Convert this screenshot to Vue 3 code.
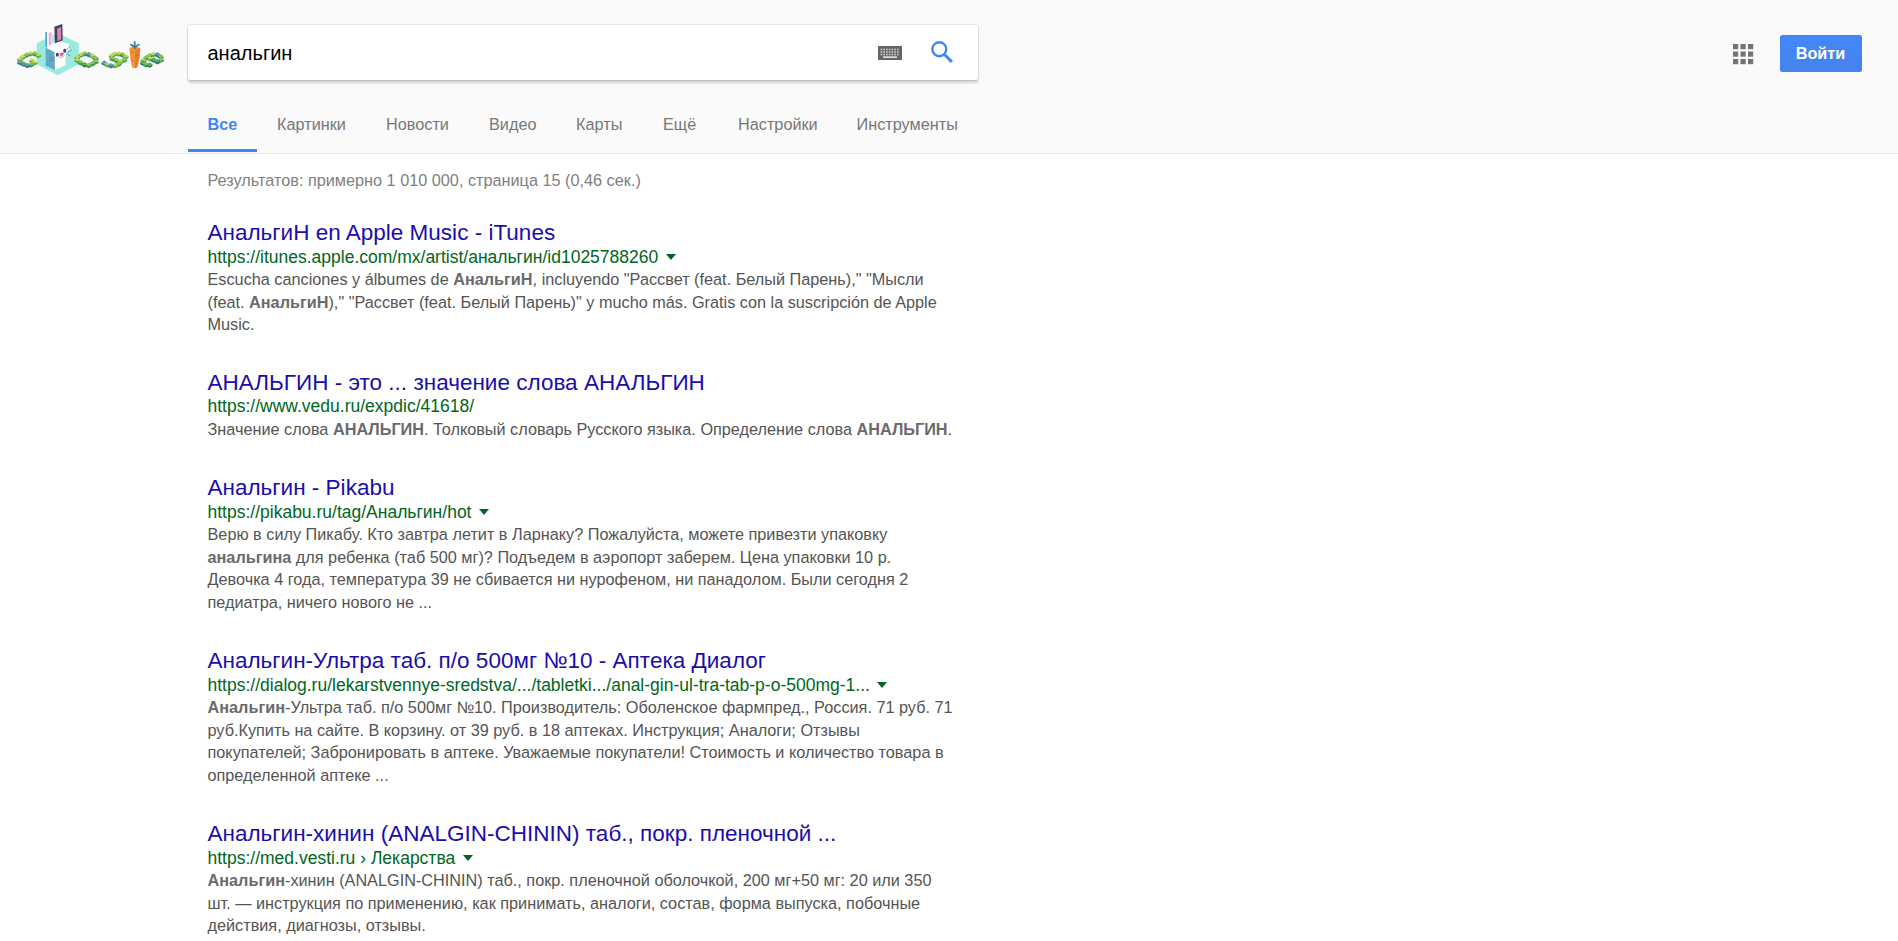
<script setup>
const tabs = [
  { label: 'Все', active: true, width: 69 },
  { label: 'Картинки', width: 109 },
  { label: 'Новости', width: 103 },
  { label: 'Видео', width: 87 },
  { label: 'Карты', width: 87 },
  { label: 'Ещё', width: 75 },
  { label: 'Настройки', width: 118.5 },
  { label: 'Инструменты', width: 142 },
]

// In snippets, text between asterisks is emphasised.
const results = [
  {
    title: 'АнальгиН en Apple Music - iTunes',
    url: 'https://itunes.apple.com/mx/artist/анальгин/id1025788260',
    menu: true,
    lines: [
      'Escucha canciones y álbumes de *АнальгиН*, incluyendo "Рассвет (feat. Белый Парень)," "Мысли',
      '(feat. *АнальгиН*)," "Рассвет (feat. Белый Парень)" y mucho más. Gratis con la suscripción de Apple',
      'Music.',
    ],
  },
  {
    title: 'АНАЛЬГИН - это ... значение слова АНАЛЬГИН',
    url: 'https://www.vedu.ru/expdic/41618/',
    menu: false,
    lines: ['Значение слова *АНАЛЬГИН*. Толковый словарь Русского языка. Определение слова *АНАЛЬГИН*.'],
  },
  {
    title: 'Анальгин - Pikabu',
    url: 'https://pikabu.ru/tag/Анальгин/hot',
    menu: true,
    lines: [
      'Верю в силу Пикабу. Кто завтра летит в Ларнаку? Пожалуйста, можете привезти упаковку',
      '*анальгина* для ребенка (таб 500 мг)? Подъедем в аэропорт заберем. Цена упаковки 10 р.',
      'Девочка 4 года, температура 39 не сбивается ни нурофеном, ни панадолом. Были сегодня 2',
      'педиатра, ничего нового не ...',
    ],
  },
  {
    title: 'Анальгин-Ультра таб. п/о 500мг №10 - Аптека Диалог',
    url: 'https://dialog.ru/lekarstvennye-sredstva/.../tabletki.../anal-gin-ul-tra-tab-p-o-500mg-1...',
    menu: true,
    lines: [
      '*Анальгин*-Ультра таб. п/о 500мг №10. Производитель: Оболенское фармпред., Россия. 71 руб. 71',
      'руб.Купить на сайте. В корзину. от 39 руб. в 18 аптеках. Инструкция; Аналоги; Отзывы',
      'покупателей; Забронировать в аптеке. Уважаемые покупатели! Стоимость и количество товара в',
      'определенной аптеке ...',
    ],
  },
  {
    title: 'Анальгин-хинин (ANALGIN-CHININ) таб., покр. пленочной ...',
    url: 'https://med.vesti.ru › Лекарства',
    menu: true,
    lines: [
      '*Анальгин*-хинин (ANALGIN-CHININ) таб., покр. пленочной оболочкой, 200 мг+50 мг: 20 или 350',
      'шт. — инструкция по применению, как принимать, аналоги, состав, форма выпуска, побочные',
      'действия, диагнозы, отзывы.',
    ],
  },
]

const parts = (line) => line.split('*').map((text, i) => ({ text, bold: i % 2 === 1 }))

// Isometric hedge cubes that form the letters: centre x, centre y, tone; back to front.
const cubes = [
  // G
  [115, 134, 0], [104, 129, 1], [92, 129, 0], [80, 133, 1], [69, 139, 0], [60, 146, 0], [60, 155, 3], [71, 160, 2], [82, 164, 3], [93, 162, 1], [104, 156, 0], [96, 150, 0],
  // o
  [243, 133, 0], [254, 129, 1], [266, 131, 3], [277, 136, 0], [287, 143, 1], [287, 153, 1], [277, 159, 1], [266, 164, 1], [254, 162, 2], [242, 156, 1], [232, 149, 0], [232, 140, 0],
  // g
  [344, 130, 0], [356, 130, 0], [367, 132, 1], [377, 138, 0], [373, 148, 1], [361, 153, 0], [349, 149, 1], [337, 144, 1], [335, 136, 0], [356, 160, 1], [345, 165, 0], [333, 165, 3], [322, 162, 0], [313, 157, 3],
  // e
  [449, 135, 1], [460, 131, 0], [472, 132, 3], [482, 138, 1], [483, 148, 1], [472, 153, 2], [461, 148, 2], [450, 144, 0], [439, 141, 1], [430, 149, 0], [429, 157, 2], [438, 162, 1], [449, 163, 2],
].sort((a, b) => a[1] - b[1])
const tones = ['#c3dc48', '#86c650', '#56ab58', '#5a9fae']
const shades = ['#63a650', '#389450', '#247b58', '#2d78a0']
const top = ([x, y]) => `${x - 8.5},${y} ${x},${y - 6} ${x + 8.5},${y} ${x},${y + 4}`
const side = ([x, y]) => `${x - 8.5},${y} ${x},${y + 4} ${x + 8.5},${y} ${x + 8.5},${y + 6} ${x},${y + 10.5} ${x - 8.5},${y + 6}`
</script>

<template>
  <div class="page">
    <header class="header">
      <div class="top">
        <svg class="logo" viewBox="0 0 540 240" width="180" height="80">
          <polygon points="173,68 236,100 236,163 173,196 110,163 110,100" fill="#99eadf" />
          <polygon points="137,65 157,64 157,110 137,114" fill="#fff" />
          <polygon points="136,65 141,66 141,112 136,113" fill="#4aa3c8" />
          <polygon points="146,69 155,66 155,105 146,108" fill="#fba6df" />
          <polygon points="137,113 172,94 207,101 208,118 198,128 196,166 165,180 162,126" fill="#fff" />
          <polygon points="137,113 163,126 165,180 137,167" fill="#64a9c9" />
          <polygon points="163,50 187,42 188,91 165,100" fill="#434047" />
          <polygon points="171,56 183,50 184,88 172,94" fill="#d781bd" />
          <ellipse cx="172" cy="134" rx="4.500" ry="6" fill="#33427c" />
          <ellipse cx="194" cy="122" rx="4.500" ry="6" fill="#33427c" />
          <path d="M178 131l9-4 5 3-4 7-7 1z" fill="#f2508c" />
          <path d="M178 141l8 1 8-7M165 141l-18 3M164 147l-17 7M200 127l15-6M200 132l13 7M198 119l12-9" fill="none" stroke="#71727e" stroke-width="2" />
          <g v-for="(c, i) in cubes" :key="i">
            <polygon :points="side(c)" :fill="shades[c[2]]" />
            <polygon :points="top(c)" :fill="tones[c[2]]" />
          </g>
          <polygon points="388,115 404,107 421,115 418,144 412,171 404,175 396,171 391,144" fill="#f49336" />
          <path d="M405 120l16-5-3 29-6 27-7 4z" fill="#e77e2e" />
          <path d="M391 125l10 4M406 138l10-4M394 151l9 3M405 162l7-3" stroke="#c9692b" stroke-width="3" />
          <path d="M404 117V94M404 111l-13-8M405 111l13-8" fill="none" stroke="#377d89" stroke-width="5" />
        </svg>

        <div class="search">
          <span class="query">анальгин</span>
          <svg class="keyboard" width="24" height="14" viewBox="0 0 24 14">
            <rect width="24" height="14" fill="#666" />
            <g fill="#c4c4c4">
              <template v-for="row in 3" :key="row">
                <rect v-for="col in 7" :key="col" :x="col * 2.75 - 0.2" :y="row * 2.5 + 0.2" width="1.700" height="1.600" />
              </template>
              <rect x="5" y="10.300" width="14" height="1.700" fill="#ddd" />
            </g>
          </svg>
          <svg class="lens" width="22" height="22" viewBox="0 0 22 22" fill="none" stroke="#4285f4">
            <circle cx="8.300" cy="8.200" r="7" stroke-width="2.400" />
            <path d="M13.200 13.200l7.700 7.700" stroke-width="3" />
          </svg>
        </div>

        <svg class="apps" width="21" height="21" viewBox="0 0 21 21" fill="#737373">
          <template v-for="row in 3" :key="row">
            <rect v-for="col in 3" :key="col" :x="(col - 1) * 7.5" :y="(row - 1) * 7.5" width="5.200" height="5.200" />
          </template>
        </svg>
        <a class="signin">Войти</a>
      </div>

      <nav class="tabs">
        <a v-for="tab in tabs" :key="tab.label" class="tab" :class="{ active: tab.active }" :style="{ width: tab.width + 'px' }">{{ tab.label }}</a>
      </nav>
    </header>

    <main class="main">
      <div class="stats">Результатов: примерно 1 010 000, страница 15 (0,46 сек.)</div>
      <article v-for="r in results" :key="r.title" class="result">
        <h3 class="title">{{ r.title }}</h3>
        <div class="url" :class="{ plain: !r.menu }"><cite>{{ r.url }}</cite><i v-if="r.menu" class="arrow"></i></div>
        <div class="snippet">
          <div v-for="line in r.lines" :key="line"><template v-for="(p, i) in parts(line)" :key="i"><b v-if="p.bold">{{ p.text }}</b><template v-else>{{ p.text }}</template></template></div>
        </div>
      </article>
    </main>
  </div>
</template>

<style>
body {
  background: #fff;
  overflow: hidden;
}
</style>

<style scoped>
.page {
  height: 941px;
  overflow: hidden;
  font-family: "Liberation Sans", Arial, sans-serif;
  font-size: 16.25px;
  white-space: nowrap;
}
.header {
  box-sizing: border-box;
  height: 154px;
  background: #fafafa;
  border-bottom: 1px solid #e8e8e8;
}
.top {
  display: flex;
  align-items: flex-start;
  height: 109px;
}
.logo {
  margin-top: 10px;
  flex: none;
}
.search {
  display: flex;
  box-sizing: border-box;
  width: 790px;
  height: 55px;
  margin: 25px 0 0 8px;
  padding-left: 19.5px;
  background: #fff;
  border-radius: 2.5px;
  box-shadow: 0 2.5px 2.5px rgba(0, 0, 0, 0.16), 0 0 0 1px rgba(0, 0, 0, 0.08);
}
.query {
  width: 670.5px;
  font-size: 20px;
  line-height: 56px;
  color: #000;
}
.keyboard {
  margin-top: 21px;
}
.lens {
  margin: 16px 0 0 29px;
}
.apps {
  margin: 44px 0 0 754.7px;
}
.signin {
  box-sizing: border-box;
  width: 82px;
  height: 37px;
  margin: 35px 0 0 26.3px;
  padding-right: 1px;
  border: 1px solid #4285f4;
  border-radius: 2px;
  background: linear-gradient(#4387fd, #4683ea);
  color: #fff;
  font-weight: bold;
  line-height: 35px;
  text-align: center;
}
.tabs {
  display: flex;
  height: 43px;
  margin-left: 188px;
}
.tab {
  box-sizing: border-box;
  flex: none;
  padding-left: 20px;
  line-height: 31px;
  color: #777;
}
.tab.active {
  padding-left: 19.5px;
  color: #4285f4;
  font-weight: bold;
  border-bottom: 3px solid #4285f4;
}
.main {
  padding-left: 207.5px;
}
.stats {
  height: 64.1px;
  line-height: 52px;
  color: #808080;
}
.result {
  margin-bottom: 32.25px;
}
.title {
  height: 27px;
  margin: 0;
  font-size: 22.5px;
  font-weight: normal;
  line-height: 29px;
  letter-spacing: 0.01px;
  color: #1a0dab;
}
.url {
  display: flex;
  align-items: center;
  height: 20px;
  margin-top: 1.5px;
  font-size: 17.5px;
  line-height: 20px;
  color: #006621;
}
.url.plain {
  height: 18.5px;
  padding-bottom: 1.5px;
}
.url cite {
  font-style: normal;
}
.arrow {
  margin-left: 7.5px;
  border: 5px solid transparent;
  border-top: 6px solid #006621;
  border-bottom: 0;
}
.snippet {
  margin-top: 1.25px;
  line-height: 22.75px;
  color: #545454;
}
.snippet b {
  color: #6a6a6a;
}
</style>
